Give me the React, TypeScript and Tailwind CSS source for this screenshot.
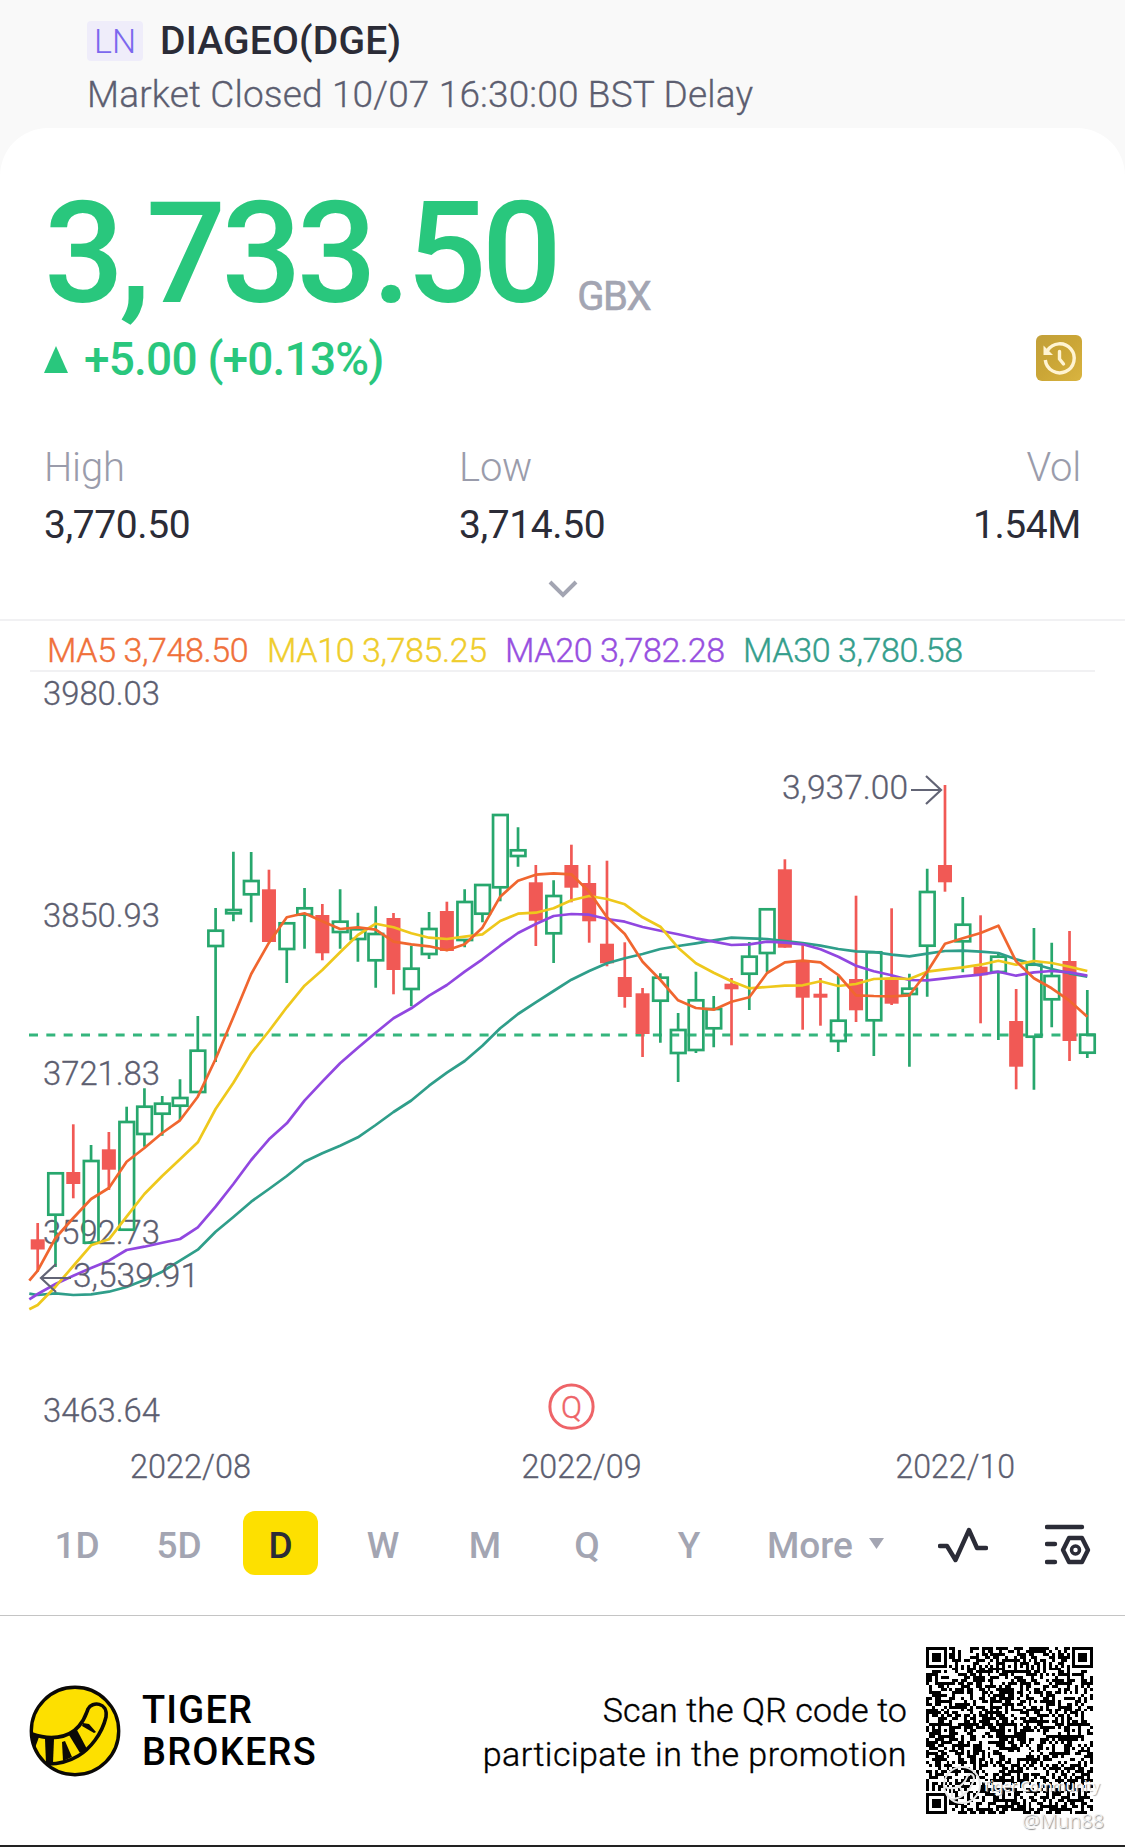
import { ReactNode } from "react";

type Candle = [up: 0 | 1, high: number, top: number, bottom: number, low: number];

const STEP = 17.79;
const FIRST_X = 37.7;
const GREEN = "#27a76d";
const RED = "#f15955";

const candles: Candle[] = [
  [0, 1223, 1239.3, 1249.5, 1271.7],
  [1, 1173.3, 1173.3, 1214.7, 1267],
  [0, 1124.3, 1172, 1184, 1198.3],
  [1, 1145, 1161, 1242.7, 1242.7],
  [0, 1132, 1149.3, 1169.7, 1190],
  [1, 1106.7, 1122, 1229.7, 1229.7],
  [1, 1088.3, 1106.7, 1134, 1146.7],
  [1, 1096, 1103.7, 1113.7, 1135.7],
  [1, 1079.3, 1098, 1105.7, 1120],
  [1, 1016, 1050.7, 1092, 1092],
  [1, 908, 930.7, 946, 1062],
  [1, 851.7, 910, 913.3, 921.3],
  [1, 852, 881, 894.3, 922.3],
  [0, 869.7, 889.3, 942, 942],
  [1, 923.3, 923.3, 949, 983],
  [1, 888, 908.3, 914.7, 948.7],
  [0, 904, 915, 953.3, 960.3],
  [1, 889.3, 921.7, 932, 948.7],
  [1, 912.7, 929.3, 939, 961.7],
  [1, 906.3, 934, 960.3, 987.7],
  [0, 913, 918, 970, 994.3],
  [1, 945.7, 968.7, 989, 1006.3],
  [1, 912, 929, 954, 959],
  [0, 901.7, 911, 951, 951],
  [1, 889.3, 902, 940, 947.3],
  [1, 885, 885, 913.7, 922.3],
  [1, 815, 815, 887.3, 901.3],
  [1, 827.3, 850.3, 856, 866.7],
  [0, 865, 882.3, 920.7, 946],
  [1, 880.3, 896, 933.3, 963],
  [0, 844.7, 865, 887.7, 902.3],
  [0, 865, 883, 921.3, 942.7],
  [0, 860.7, 943.7, 963.3, 966.3],
  [0, 942.3, 977, 997, 1007.7],
  [0, 988, 993.3, 1034, 1057],
  [1, 973.3, 977.7, 1000.7, 1042.7],
  [1, 1013, 1030, 1053, 1082],
  [1, 971.7, 1000.3, 1050, 1053],
  [1, 996, 1009, 1028.3, 1047.3],
  [0, 978, 983.7, 989.3, 1045.3],
  [1, 942, 956.7, 973.7, 1010],
  [1, 909.3, 909.3, 953, 972.3],
  [0, 859.3, 869.3, 947.7, 947.7],
  [0, 943.3, 960, 997.7, 1029.7],
  [0, 978, 993.7, 997.7, 1025.7],
  [1, 976, 1020.7, 1041, 1052],
  [0, 895.7, 979, 1010.3, 1022],
  [1, 952.3, 952.3, 1020.3, 1056],
  [0, 908.3, 979, 1003.7, 1005],
  [1, 973.7, 988.7, 994, 1066.7],
  [1, 868.7, 892, 945.7, 996.7],
  [0, 785, 865, 882.3, 891.7],
  [1, 897, 924.7, 941.3, 972.3],
  [0, 915.3, 966.7, 975.3, 1023.3],
  [1, 953, 956.7, 972, 1040],
  [0, 989, 1021, 1066.7, 1089.3],
  [1, 928, 964.7, 1036.7, 1089.7],
  [1, 942.7, 976, 999.3, 1027.3],
  [0, 931, 961, 1041, 1061],
  [1, 990, 1034.7, 1052.7, 1058],
];

// first value sits on the left edge of the plot, the rest on the candles
const averages = [
  {
    label: "MA30 3,780.58",
    color: "#2f9e8a",
    values: [
      1293.7, 1295, 1293.3, 1295, 1294.3, 1291.7, 1287, 1280, 1271.7, 1260.7, 1249.7, 1231.7, 1217, 1201.7, 1189,
      1176, 1161.7, 1153.3, 1145.7, 1137.3, 1125, 1112, 1100.5, 1085.7, 1072.7, 1061, 1045.7, 1028.3, 1014, 1002.3,
      991, 979.7, 971, 963.3, 958.3, 954, 949, 946, 943.3, 940.3, 937.7, 938.3, 939, 941, 943, 945.7, 949, 951.3,
      952, 954.7, 956.3, 953.7, 951, 950.7, 951.7, 953, 959.3, 964, 969, 973.3, 976.7,
    ],
  },
  {
    label: "MA20 3,782.28",
    color: "#9147e0",
    values: [
      1299.3, 1294, 1284, 1275.7, 1268, 1260.7, 1250, 1246.7, 1242.7, 1239, 1227.3, 1206.7, 1184, 1160, 1139.3,
      1123.3, 1100.7, 1081.7, 1063.3, 1047.7, 1032.7, 1018.3, 1008.3, 995.7, 985, 971.7, 959.3, 945.7, 933, 924,
      916, 914, 914.7, 919, 921.7, 927, 930.7, 934.3, 938.3, 941.7, 945, 944.3, 941.7, 942.7, 944.3, 949.3, 956.7,
      965.7, 971.3, 975.3, 980, 980.3, 978.3, 976.3, 974.7, 971.7, 975.7, 972.3, 971, 972.3, 975.7,
    ],
  },
  {
    label: "MA10 3,785.25",
    color: "#eec81c",
    values: [
      1309.3, 1305, 1286.7, 1266, 1245.3, 1239.3, 1216.7, 1194, 1176, 1159.3, 1142.3, 1109, 1082.7, 1053.3, 1031,
      1007.3, 985.7, 970, 952.3, 935, 923.7, 927.3, 933.3, 937.7, 939, 936.7, 934.3, 921, 913.7, 912.7, 908.3,
      900.3, 896, 899, 904.3, 917.3, 926.7, 947.7, 963.3, 972.7, 981.3, 988.3, 987, 985.7, 985.3, 981.3, 986, 984,
      979, 978.3, 979, 971.7, 969.3, 967.3, 964.7, 960.7, 964.7, 961, 963, 966.7, 971,
    ],
  },
  {
    label: "MA5 3,748.50",
    color: "#f0662f",
    values: [
      1280.7, 1270.7, 1238, 1218, 1199, 1188, 1161.7, 1148, 1133, 1120.3, 1096.7, 1059, 1017, 974, 942.7, 917.3,
      913.3, 921.3, 929, 927.3, 929.7, 941.7, 944.3, 946.3, 950.3, 944.3, 927.7, 896.7, 880.7, 874.7, 873.3, 874.3,
      891.7, 917.3, 934, 961.7, 980, 1000.3, 1008, 1009.7, 1001.7, 997.3, 973, 962.3, 960.7, 962.3, 975, 995.3, 996,
      996.3, 995.3, 971.7, 943.7, 938.3, 933, 925.7, 961.3, 978.3, 988.3, 1000.7, 1016.7,
    ],
  },
];

const legend = [
  { text: "MA5 3,748.50", className: "w-[220px] text-[#f0703a]" },
  { text: "MA10 3,785.25", className: "w-[238px] text-[#efcd2c]" },
  { text: "MA20 3,782.28", className: "w-[238px] text-[#974fe0]" },
  { text: "MA30 3,780.58", className: "text-[#349e8c]" },
];

const axisLabels: [string, number, number, number][] = [
  ["3980.03", 43, 705, 117],
  ["3850.93", 43, 927, 117],
  ["3721.83", 43, 1085.3, 117],
  ["3592.73", 43, 1244, 117],
  ["3463.64", 43, 1422, 117],
  ["2022/08", 130, 1477.5, 121],
  ["2022/09", 521.5, 1477.5, 120],
  ["2022/10", 895.5, 1477.5, 119.5],
];

const tabs = ["1D", "5D", "D", "W", "M", "Q", "Y"];

function pointsOf(values: number[]) {
  return values
    .map((y, i) => `${i === 0 ? 29.3 : (FIRST_X + (i - 1) * STEP).toFixed(1)},${y}`)
    .join(" ");
}

function ChartText({ x, y, width, children }: { x: number; y: number; width: number; children: ReactNode }) {
  return (
    <text
      x={x}
      y={y}
      textLength={width}
      lengthAdjust="spacingAndGlyphs"
      fill="#5c5e70"
      stroke="#5c5e70"
      strokeWidth="0.3"
      className="text-[34px] font-light"
    >
      {children}
    </text>
  );
}

function Chart() {
  return (
    <svg width="1125" height="820" viewBox="0 671 1125 820" className="block" fill="none">
      {axisLabels.map(([text, x, y, width]) => (
        <ChartText key={text} x={x} y={y} width={width}>
          {text}
        </ChartText>
      ))}
      <line x1="29" x2="1096" y1="1035" y2="1035" stroke="#34b57d" strokeWidth="3" strokeDasharray="9 8.33" />
      {candles.map(([up, high, top, bottom, low], i) => {
        const x = FIRST_X + i * STEP;
        return up ? (
          <g key={i} stroke={GREEN} strokeWidth="2.7">
            <path d={`M${x} ${high}V${top}M${x} ${bottom}V${low}`} />
            <rect x={x - 7.2} y={top} width="14.6" height={bottom - top} />
          </g>
        ) : (
          <g key={i}>
            <path d={`M${x} ${high}V${low}`} stroke={RED} strokeWidth="2.7" />
            <rect x={x - 7} y={top} width="14" height={bottom - top} fill={RED} />
          </g>
        );
      })}
      {averages.map((line) => (
        <polyline
          key={line.label}
          points={pointsOf(line.values)}
          stroke={line.color}
          strokeWidth="2.7"
          strokeLinejoin="round"
        />
      ))}
      <ChartText x={782} y={799} width={126}>
        3,937.00
      </ChartText>
      <path d="M911 790H941M926 776L941 790L926 804" stroke="#626475" strokeWidth="2.2" />
      <ChartText x={73} y={1287} width={126}>
        3,539.91
      </ChartText>
      <path d="M71 1278H41M56 1264L41 1278L56 1292" stroke="#626475" strokeWidth="2.2" />
      <circle cx="571.5" cy="1406.7" r="21.6" stroke="#ee6468" strokeWidth="3" />
      <text
        x="571.5"
        y="1417.5"
        textAnchor="middle"
        fill="#ee6468"
        stroke="#ee6468"
        strokeWidth="0.4"
        className="text-[31px] font-light"
      >
        Q
      </text>
    </svg>
  );
}

function HistoryIcon() {
  return (
    <svg width="46" height="46" viewBox="0 0 46 46" className="mt-px -mr-px" fill="none">
      <defs>
        <linearGradient id="gold" x1="0" y1="0" x2="1" y2="1">
          <stop offset="0" stopColor="#c2a03a" />
          <stop offset="0.5" stopColor="#cba636" />
          <stop offset="1" stopColor="#d9b440" />
        </linearGradient>
      </defs>
      <rect width="46" height="46" rx="6" fill="url(#gold)" />
      <path d="M11.5 15.5A14.5 14.5 0 1 1 9.3 25" stroke="#fff4d2" strokeWidth="3.4" />
      <path d="M7.5 10.5V20H17Z" fill="#fff4d2" />
      <path d="M23.5 16.5V24L27.5 29" stroke="#fff4d2" strokeWidth="3.4" strokeLinecap="round" />
    </svg>
  );
}

function TigerLogo() {
  return (
    <svg width="92" height="92" viewBox="0 0 92 92" fill="none">
      <circle cx="46" cy="46" r="43.7" fill="#fde000" stroke="#0b0906" strokeWidth="3.4" />
      <path
        d="M3 49C20 55 39 54 50 41C56 34 57 29 59 24C63 16 79 17 77 32C73 49 61 64 49 71C39 77 28 79 19 79"
        stroke="#0b0906"
        strokeWidth="3.6"
      />
      <path d="M3 49L10 52L6 63L3 60Z" fill="#0b0906" />
      <path d="M16 54H25L24 78L17 79Z" fill="#0b0906" />
      <path d="M33 57L36 56L43 72L34 76Z" fill="#0b0906" />
      <path d="M40 50L48 45L58 64L51 68Z" fill="#0b0906" />
      <path d="M54 38L60 39L67 47L65 48L53 41Z" fill="#0b0906" />
    </svg>
  );
}

const QR_SIZE = 57;

function buildQr() {
  const near = (n: number, at: number, r: number) => Math.abs(n - at) <= r;
  const finders = [
    [3, 3],
    [QR_SIZE - 4, 3],
    [3, QR_SIZE - 4],
  ];
  const marks = [
    [28, 6],
    [6, 28],
    [28, 28],
    [50, 28],
    [28, 50],
    [50, 50],
  ];
  let seed = 88137;
  let d = "";
  for (let y = 0; y < QR_SIZE; y++) {
    for (let x = 0; x < QR_SIZE; x++) {
      seed = (seed * 1103515245 + 12345) % 2147483648;
      let on = seed / 2147483648 < 0.52;
      if (x === 6) on = y % 2 === 0;
      if (y === 6) on = x % 2 === 0;
      for (const [mx, my] of marks) {
        if (near(x, mx, 2) && near(y, my, 2)) {
          on = Math.max(Math.abs(x - mx), Math.abs(y - my)) !== 1;
        }
      }
      for (const [fx, fy] of finders) {
        if (near(x, fx, 4) && near(y, fy, 4)) {
          const ring = Math.max(Math.abs(x - fx), Math.abs(y - fy));
          on = ring === 3 || ring < 2;
        }
      }
      if (on) d += `M${x} ${y}h1v1h-1z`;
    }
  }
  return d;
}

const qrPath = buildQr();

function Stat({ label, value, className }: { label: string; value: string; className: string }) {
  return (
    <div className={className}>
      <div className="text-[40px] leading-none font-light tracking-[-0.2px] text-[#9a9cab]">{label}</div>
      <div className="mt-[18px] text-[39px] leading-none tracking-[-0.4px] text-[#2b2c37]">{value}</div>
    </div>
  );
}

export default function App() {
  return (
    <div className="flex h-[1847px] w-[1125px] flex-col overflow-hidden bg-[#f9f9f9] font-['Roboto',sans-serif]">
      <header className="h-32 shrink-0 pt-[21px] pl-[87px]">
        <div className="flex h-10 items-center">
          <span className="flex h-10 w-14 items-center justify-center rounded bg-[#efedfa] text-[34px] leading-none font-light text-[#7c68ee]">
            LN
          </span>
          <h1 className="ml-[17px] text-[39px] leading-none font-medium tracking-[0.2px] text-[#2b2c37]">
            DIAGEO(DGE)
          </h1>
        </div>
        <p className="mt-[15px] text-[37px] leading-none font-light tracking-[0.16px] whitespace-nowrap text-[#5c5e70] [-webkit-text-stroke:0.3px_#5c5e70]">
          Market Closed 10/07 16:30:00 BST Delay
        </p>
      </header>

      <main className="flex grow flex-col rounded-t-[48px] bg-white">
        <section className="h-[491px] px-11 pt-[55px]">
          <div className="flex h-[141px] items-end text-[#29c77d]">
            <span className="text-[141px] leading-none font-medium tracking-[-4.8px]">3,733.50</span>
            <span className="mb-[7px] ml-5 text-[40px] leading-none tracking-[-1.4px] text-[#a3a5b2] [-webkit-text-stroke:0.6px_#a3a5b2]">
              GBX
            </span>
          </div>
          <div className="mt-[10px] flex h-[54px] justify-between">
            <div className="flex text-[#29c77d]">
              <svg width="24" height="27" viewBox="0 0 24 27" className="mt-3">
                <path d="M12 0L24 27H0Z" fill="currentColor" />
              </svg>
              <span className="mt-[2px] ml-4 text-[46px] leading-none font-medium tracking-[-0.8px]">
                +5.00 (+0.13%)
              </span>
            </div>
            <HistoryIcon />
          </div>
          <div className="mt-[60px] flex">
            <Stat label="High" value="3,770.50" className="w-[415px]" />
            <Stat label="Low" value="3,714.50" className="grow" />
            <Stat label="Vol" value="1.54M" className="text-right" />
          </div>
          <svg width="30" height="18" viewBox="0 0 30 18" className="mx-auto mt-[35px]" fill="none">
            <path d="M2 2L15 15L28 2" stroke="#a3a5b2" strokeWidth="4" />
          </svg>
        </section>

        <section className="border-t-2 border-[#f1f1f3]">
          <div className="mx-[30px] flex h-[51px] items-center border-b-2 border-[#f1f1f3] pt-2 pl-[17px] text-[34px] leading-none font-light tracking-[-0.4px] whitespace-nowrap [-webkit-text-stroke:0.4px_currentColor]">
            {legend.map((item) => (
              <span key={item.text} className={item.className}>
                {item.text}
              </span>
            ))}
          </div>
          <div className="-mt-px">
            <Chart />
          </div>
        </section>

        <nav className="flex h-[104px] shrink-0 items-center pl-[26px] text-[37px] leading-none font-medium text-[#a3a5b2]">
          {tabs.map((tab) => (
            <div key={tab} className="flex w-[102px] justify-center">
              <span
                className={
                  tab === "D"
                    ? "mr-px flex h-16 w-[75px] items-center justify-center rounded-xl bg-[#fde000] pt-1 text-[#2b2c37]"
                    : "pt-1"
                }
              >
                {tab}
              </span>
            </div>
          ))}
          <span className="ml-[27px] pt-1">More</span>
          <svg width="15" height="11" viewBox="0 0 15 11" className="ml-4">
            <path d="M0 0H15L7.5 11Z" fill="currentColor" />
          </svg>
          <svg width="50" height="38" viewBox="0 0 50 38" className="mt-[3px] ml-[54px]" fill="none">
            <path
              d="M2 20H9L17.5 34L31 4L39 22H48"
              stroke="#2b2c37"
              strokeWidth="4.4"
              strokeLinecap="round"
              strokeLinejoin="round"
            />
          </svg>
          <svg width="46" height="42" viewBox="0 0 46 42" className="mt-[3px] ml-[57px]" fill="none">
            <g stroke="#2b2c37" strokeWidth="4.4" strokeLinecap="round" strokeLinejoin="round">
              <path d="M2 3H37M2 20H10M2 38H10" />
              <path d="M24 14H37L43 26L37 38H24L18 26Z" />
              <circle cx="30.5" cy="26" r="4" strokeWidth="3.5" />
            </g>
          </svg>
        </nav>

        <footer className="relative mt-5 flex h-[232px] shrink-0 items-start border-t border-b-2 border-t-[#c4c4c4] border-b-[#222] text-black">
          <div className="mt-[69px] ml-[29px]">
            <TigerLogo />
          </div>
          <div className="mt-[73px] ml-[21px] text-[38px] leading-[42px] font-medium tracking-[1.2px]">
            TIGER
            <br />
            BROKERS
          </div>
          <p className="mt-[72px] ml-auto text-right text-[34px] leading-[44px] font-light [-webkit-text-stroke:0.4px_#000]">
            <span className="tracking-[0.1px]">Scan the QR code to</span>
            <br />
            <span className="tracking-[0.45px]">participate in the promotion</span>
          </p>
          <svg
            width="167"
            height="167"
            viewBox="0 0 57 57"
            className="mt-[31px] mr-8 ml-[19px]"
            shapeRendering="crispEdges"
          >
            <path d={qrPath} fill="#000" />
          </svg>
          <div className="absolute top-[149px] left-[942px] flex items-center font-['Noto_Sans',sans-serif] whitespace-nowrap text-white [text-shadow:1px_1px_1px_#aaa]">
            <svg width="40" height="40" viewBox="0 0 40 40" fill="none" stroke="#e8e8e8" strokeWidth="2">
              <circle cx="20" cy="20" r="18" />
              <path d="M2 22C14 26 22 20 25 12C28 6 34 10 31 17C27 28 18 34 9 34M10 24V32M18 22L21 30" />
            </svg>
            <span className="text-[15px] leading-none tracking-[-0.3px]">Tiger Community</span>
          </div>
          <span className="absolute top-[195px] right-[21px] font-['Noto_Sans',sans-serif] text-[20px] leading-none font-light text-[#f2f2f2] [text-shadow:1px_1px_1px_#888]">
            @Mun88
          </span>
        </footer>
      </main>
    </div>
  );
}
